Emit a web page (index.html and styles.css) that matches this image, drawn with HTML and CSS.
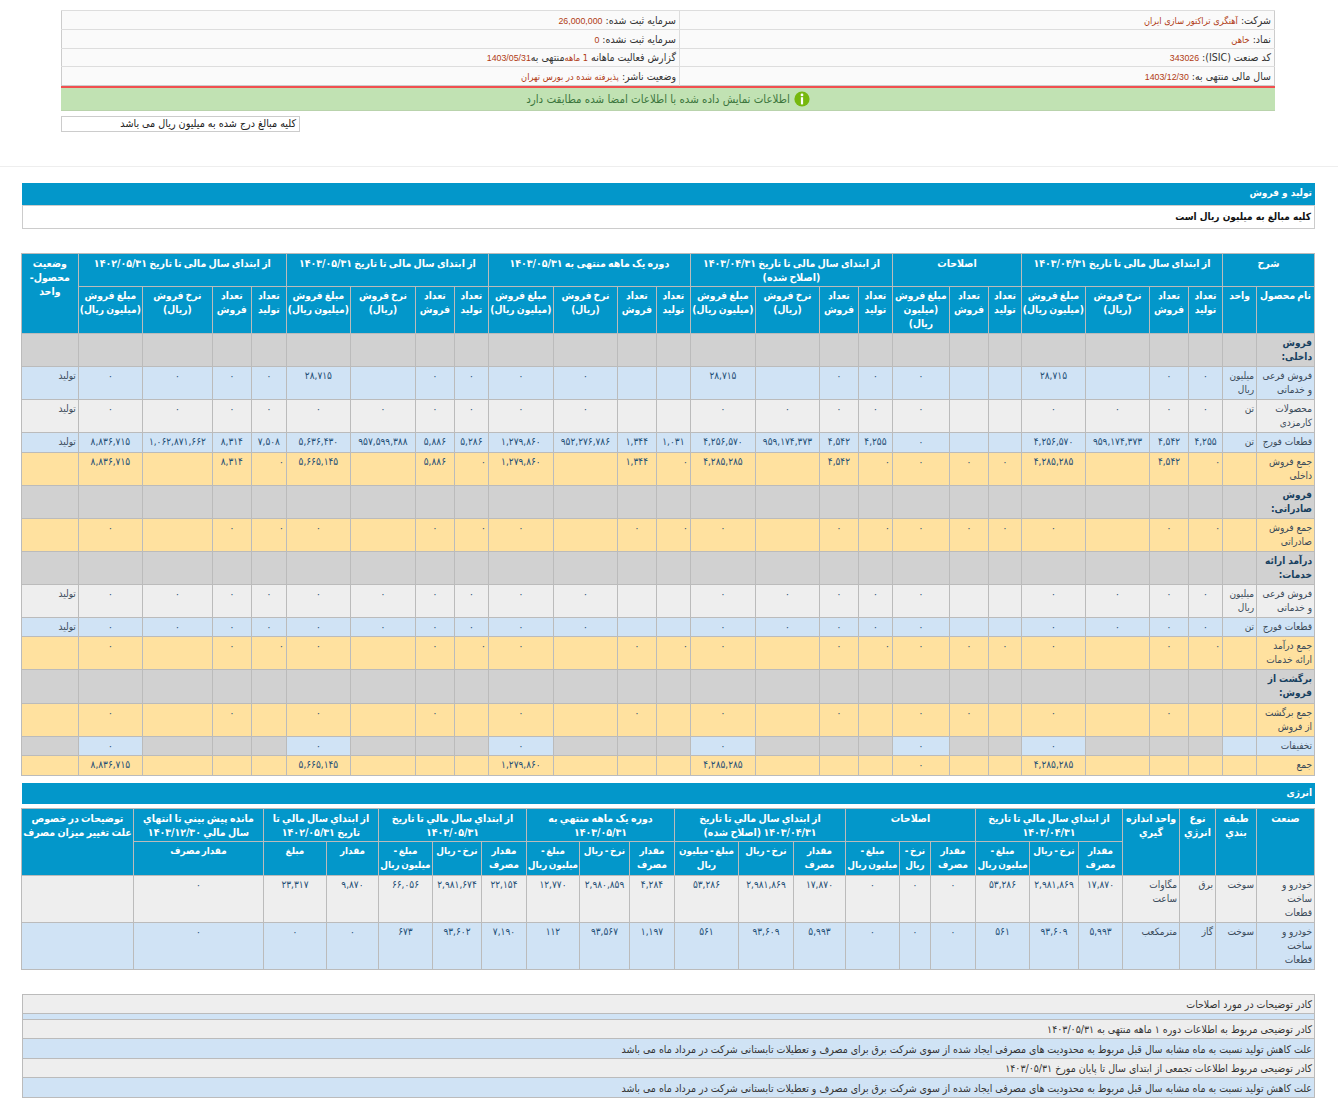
FILE: index.html
```html
<!DOCTYPE html>
<html lang="fa" dir="rtl">
<head>
<meta charset="utf-8">
<title>گزارش فعالیت ماهانه</title>
<link rel="stylesheet" href="styles.css">
</head>
<body>
<header class="top">
  <table class="info">
    <tr class="ih19"><td class="i-r"><span class="lb">شرکت:</span> <span class="val">آهنگری تراکتور سازی ایران</span></td><td><span class="lb">سرمایه ثبت شده:</span> <span class="val num">26,000,000</span></td></tr>
    <tr class="ih19"><td class="i-r"><span class="lb">نماد:</span> <span class="val">خاهن</span></td><td><span class="lb">سرمایه ثبت نشده:</span> <span class="val num">0</span></td></tr>
    <tr class="ih18"><td class="i-r"><span class="lb">کد صنعت (ISIC):</span> <span class="val num">343026</span></td><td><span class="lb">گزارش فعالیت ماهانه</span> <span class="val">1 ماهه</span><span class="lb">‌منتهی به</span><span class="val num">1403/05/31</span></td></tr>
    <tr class="ih19"><td class="i-r"><span class="lb">سال مالی منتهی به:</span> <span class="val num">1403/12/30</span></td><td><span class="lb">وضعیت ناشر:</span> <span class="val">پذیرفته شده در بورس تهران</span></td></tr>
  </table>
  <div class="ok">
    <svg class="ok-ico" viewBox="0 0 16 16" aria-hidden="true"><circle cx="8" cy="8" r="7.6" fill="#76b80e"/><circle cx="8" cy="3.9" r="1.4" fill="#fff"/><rect x="6.9" y="6.2" width="2.2" height="7.2" fill="#fff"/></svg>
    <span>اطلاعات نمایش داده شده با اطلاعات امضا شده مطابقت دارد</span>
  </div>
  <div class="note-row"><div class="note">کلیه مبالغ درج شده به میلیون ریال می باشد</div></div>
</header>
<hr class="sep">
<main class="content">
  <h2 class="bar">تولید و فروش</h2>
  <div class="sub">کلیه مبالغ به میلیون ریال است</div>

  <table class="grid main">
    <colgroup>
      <col class="w58"><col class="w34">
      <col class="w34"><col class="w39"><col class="w64"><col class="w64">
      <col class="w33"><col class="w39"><col class="w57">
      <col class="w34"><col class="w39"><col class="w64"><col class="w65">
      <col class="w34"><col class="w39"><col class="w64"><col class="w65">
      <col class="w34"><col class="w39"><col class="w65"><col class="w64">
      <col class="w35"><col class="w39"><col class="w70"><col class="w64">
      <col class="w57">
    </colgroup>
    <thead>
      <tr class="h33">
        <th colspan="2">شرح</th>
        <th colspan="4">از ابتدای سال مالی تا تاریخ ۱۴۰۳/۰۴/۳۱</th>
        <th colspan="3">اصلاحات</th>
        <th colspan="4">از ابتدای سال مالی تا تاریخ ۱۴۰۳/۰۴/۳۱ (اصلاح&nbsp;شده)</th>
        <th colspan="4">دوره یک ماهه منتهی به ۱۴۰۳/۰۵/۳۱</th>
        <th colspan="4">از ابتدای سال مالی تا تاریخ ۱۴۰۳/۰۵/۳۱</th>
        <th colspan="4">از ابتدای سال مالی تا تاریخ ۱۴۰۲/۰۵/۳۱</th>
        <th rowspan="2">وضعیت محصول- واحد</th>
      </tr>
      <tr class="h47">
        <th>نام محصول</th><th>واحد</th>
        <th>تعداد تولید</th><th>تعداد فروش</th><th>نرخ فروش (ریال)</th><th>مبلغ فروش (میلیون&nbsp;ریال)</th>
        <th>تعداد تولید</th><th>تعداد فروش</th><th>مبلغ فروش (میلیون ریال)</th>
        <th>تعداد تولید</th><th>تعداد فروش</th><th>نرخ فروش (ریال)</th><th>مبلغ فروش (میلیون&nbsp;ریال)</th>
        <th>تعداد تولید</th><th>تعداد فروش</th><th>نرخ فروش (ریال)</th><th>مبلغ فروش (میلیون&nbsp;ریال)</th>
        <th>تعداد تولید</th><th>تعداد فروش</th><th>نرخ فروش (ریال)</th><th>مبلغ فروش (میلیون&nbsp;ریال)</th>
        <th>تعداد تولید</th><th>تعداد فروش</th><th>نرخ فروش (ریال)</th><th>مبلغ فروش (میلیون&nbsp;ریال)</th>
      </tr>
    </thead>
    <tbody>
      <tr class="h33 sec"><td class="nm">فروش داخلی:</td><td colspan="1"></td><td></td><td></td><td></td><td></td><td></td><td></td><td></td><td></td><td></td><td></td><td></td><td></td><td></td><td></td><td></td><td></td><td></td><td></td><td></td><td></td><td></td><td></td><td></td><td></td></tr>
      <tr class="h33 blu"><td class="tx">فروش فرعی و خدماتی</td><td class="tx">میلیون ریال</td><td>۰</td><td>۰</td><td></td><td>۲۸,۷۱۵</td><td></td><td></td><td>۰</td><td>۰</td><td>۰</td><td></td><td>۲۸,۷۱۵</td><td></td><td></td><td>۰</td><td>۰</td><td>۰</td><td>۰</td><td></td><td>۲۸,۷۱۵</td><td>۰</td><td>۰</td><td>۰</td><td>۰</td><td class="tx">تولید</td></tr>
      <tr class="h33 lgt"><td class="tx">محصولات کارمزدی</td><td class="tx">تن</td><td>۰</td><td>۰</td><td>۰</td><td>۰</td><td></td><td></td><td>۰</td><td>۰</td><td>۰</td><td>۰</td><td>۰</td><td></td><td></td><td>۰</td><td>۰</td><td>۰</td><td>۰</td><td>۰</td><td>۰</td><td>۰</td><td>۰</td><td>۰</td><td>۰</td><td class="tx">تولید</td></tr>
      <tr class="h20 blu"><td class="tx">قطعات فورج</td><td class="tx">تن</td><td>۴,۲۵۵</td><td>۴,۵۴۲</td><td>۹۵۹,۱۷۴,۳۷۳</td><td>۴,۲۵۶,۵۷۰</td><td></td><td></td><td>۰</td><td>۴,۲۵۵</td><td>۴,۵۴۲</td><td>۹۵۹,۱۷۴,۳۷۳</td><td>۴,۲۵۶,۵۷۰</td><td>۱,۰۳۱</td><td>۱,۳۴۴</td><td>۹۵۲,۲۷۶,۷۸۶</td><td>۱,۲۷۹,۸۶۰</td><td>۵,۲۸۶</td><td>۵,۸۸۶</td><td>۹۵۷,۵۹۹,۳۸۸</td><td>۵,۶۳۶,۴۳۰</td><td>۷,۵۰۸</td><td>۸,۳۱۴</td><td>۱,۰۶۲,۸۷۱,۶۶۲</td><td>۸,۸۳۶,۷۱۵</td><td class="tx">تولید</td></tr>
      <tr class="h33 sum"><td class="tx">جمع فروش داخلی</td><td></td><td class="st">۰</td><td>۴,۵۴۲</td><td></td><td>۴,۲۸۵,۲۸۵</td><td>۰</td><td>۰</td><td>۰</td><td class="st">۰</td><td>۴,۵۴۲</td><td></td><td>۴,۲۸۵,۲۸۵</td><td class="st">۰</td><td>۱,۳۴۴</td><td></td><td>۱,۲۷۹,۸۶۰</td><td class="st">۰</td><td>۵,۸۸۶</td><td></td><td>۵,۶۶۵,۱۴۵</td><td class="st">۰</td><td>۸,۳۱۴</td><td></td><td>۸,۸۳۶,۷۱۵</td><td></td></tr>
      <tr class="h33 sec"><td class="nm">فروش صادراتی:</td><td></td><td></td><td></td><td></td><td></td><td></td><td></td><td></td><td></td><td></td><td></td><td></td><td></td><td></td><td></td><td></td><td></td><td></td><td></td><td></td><td></td><td></td><td></td><td></td><td></td></tr>
      <tr class="h33 sum"><td class="tx">جمع فروش صادراتی</td><td></td><td class="st">۰</td><td>۰</td><td></td><td>۰</td><td>۰</td><td>۰</td><td>۰</td><td class="st">۰</td><td>۰</td><td></td><td>۰</td><td class="st">۰</td><td>۰</td><td></td><td>۰</td><td class="st">۰</td><td>۰</td><td></td><td>۰</td><td class="st">۰</td><td>۰</td><td></td><td>۰</td><td></td></tr>
      <tr class="h32 sec"><td class="nm">درآمد ارائه خدمات:</td><td></td><td></td><td></td><td></td><td></td><td></td><td></td><td></td><td></td><td></td><td></td><td></td><td></td><td></td><td></td><td></td><td></td><td></td><td></td><td></td><td></td><td></td><td></td><td></td><td></td></tr>
      <tr class="h33 lgt"><td class="tx">فروش فرعی و خدماتی</td><td class="tx">میلیون ریال</td><td>۰</td><td>۰</td><td>۰</td><td>۰</td><td></td><td></td><td>۰</td><td>۰</td><td>۰</td><td>۰</td><td>۰</td><td></td><td></td><td>۰</td><td>۰</td><td>۰</td><td>۰</td><td>۰</td><td>۰</td><td>۰</td><td>۰</td><td>۰</td><td>۰</td><td class="tx">تولید</td></tr>
      <tr class="h19 blu"><td class="tx">قطعات فورج</td><td class="tx">تن</td><td>۰</td><td>۰</td><td>۰</td><td>۰</td><td></td><td></td><td>۰</td><td>۰</td><td>۰</td><td>۰</td><td>۰</td><td></td><td></td><td>۰</td><td>۰</td><td>۰</td><td>۰</td><td>۰</td><td>۰</td><td>۰</td><td>۰</td><td>۰</td><td>۰</td><td class="tx">تولید</td></tr>
      <tr class="h33 sum"><td class="tx">جمع درآمد ارائه خدمات</td><td></td><td class="st">۰</td><td>۰</td><td></td><td>۰</td><td>۰</td><td>۰</td><td>۰</td><td class="st">۰</td><td>۰</td><td></td><td>۰</td><td class="st">۰</td><td>۰</td><td></td><td>۰</td><td class="st">۰</td><td>۰</td><td></td><td>۰</td><td class="st">۰</td><td>۰</td><td></td><td>۰</td><td></td></tr>
      <tr class="h34 sec"><td class="nm">برگشت از فروش:</td><td></td><td></td><td></td><td></td><td></td><td></td><td></td><td></td><td></td><td></td><td></td><td></td><td></td><td></td><td></td><td></td><td></td><td></td><td></td><td></td><td></td><td></td><td></td><td></td><td></td></tr>
      <tr class="h33 sum"><td class="tx">جمع برگشت از فروش</td><td></td><td></td><td>۰</td><td></td><td>۰</td><td></td><td>۰</td><td>۰</td><td></td><td>۰</td><td></td><td>۰</td><td></td><td>۰</td><td></td><td>۰</td><td></td><td>۰</td><td></td><td>۰</td><td></td><td>۰</td><td></td><td>۰</td><td></td></tr>
      <tr class="h19 sec plain"><td class="tx blc">تخفیفات</td><td class="blc"></td><td></td><td></td><td></td><td class="blc">۰</td><td></td><td></td><td class="blc">۰</td><td></td><td></td><td></td><td class="blc">۰</td><td></td><td></td><td></td><td class="blc">۰</td><td></td><td></td><td></td><td class="blc">۰</td><td></td><td></td><td></td><td class="blc">۰</td><td></td></tr>
      <tr class="h20 sum"><td class="tx">جمع</td><td></td><td></td><td></td><td></td><td>۴,۲۸۵,۲۸۵</td><td></td><td></td><td>۰</td><td></td><td></td><td></td><td>۴,۲۸۵,۲۸۵</td><td></td><td></td><td></td><td>۱,۲۷۹,۸۶۰</td><td></td><td></td><td></td><td>۵,۶۶۵,۱۴۵</td><td></td><td></td><td></td><td>۸,۸۳۶,۷۱۵</td><td></td></tr>
    </tbody>
  </table>

  <h2 class="bar bar-en">انرژی</h2>
  <table class="grid energy">
    <colgroup>
      <col class="w58"><col class="w41"><col class="w36"><col class="w57">
      <col class="w44"><col class="w49"><col class="w54">
      <col class="w45"><col class="w31"><col class="w54">
      <col class="w52"><col class="w55"><col class="w64">
      <col class="w45"><col class="w50"><col class="w53">
      <col class="w45"><col class="w49"><col class="w54">
      <col class="w52"><col class="w63">
      <col class="w130"><col class="w112">
    </colgroup>
    <thead>
      <tr class="h33">
        <th rowspan="2">صنعت</th><th rowspan="2">طبقه بندي</th><th rowspan="2">نوع انرژي</th><th rowspan="2">واحد اندازه گيري</th>
        <th colspan="3">از ابتداي سال مالي تا تاريخ ۱۴۰۳/۰۴/۳۱</th>
        <th colspan="3">اصلاحات</th>
        <th colspan="3">از ابتداي سال مالي تا تاريخ ۱۴۰۳/۰۴/۳۱ (اصلاح&nbsp;شده)</th>
        <th colspan="3">دوره يک ماهه منتهي به ۱۴۰۳/۰۵/۳۱</th>
        <th colspan="3">از ابتداي سال مالي تا تاريخ ۱۴۰۳/۰۵/۳۱</th>
        <th colspan="2">از ابتداي سال مالي تا تاريخ ۱۴۰۲/۰۵/۳۱</th>
        <th>مانده پيش بيني تا انتهاي سال مالي ۱۴۰۳/۱۲/۳۰</th>
        <th rowspan="2">توضيحات در خصوص علت تغيير ميزان مصرف</th>
      </tr>
      <tr class="h34">
        <th>مقدار مصرف</th><th>نرخ - ريال</th><th>مبلغ - میلیون&nbsp;ریال</th>
        <th>مقدار مصرف</th><th>نرخ - ريال</th><th>مبلغ - میلیون&nbsp;ریال</th>
        <th>مقدار مصرف</th><th>نرخ - ريال</th><th>مبلغ - میلیون ریال</th>
        <th>مقدار مصرف</th><th>نرخ - ريال</th><th>مبلغ - میلیون&nbsp;ریال</th>
        <th>مقدار مصرف</th><th>نرخ - ريال</th><th>مبلغ - میلیون&nbsp;ریال</th>
        <th>مقدار</th><th>مبلغ</th><th>مقدار مصرف</th>
      </tr>
    </thead>
    <tbody>
      <tr class="h47 lgt"><td class="tx">خودرو و ساخت قطعات</td><td class="tx">سوخت</td><td class="tx">برق</td><td class="tx">مگاوات ساعت</td><td>۱۷,۸۷۰</td><td>۲,۹۸۱,۸۶۹</td><td>۵۳,۲۸۶</td><td>۰</td><td>۰</td><td>۰</td><td>۱۷,۸۷۰</td><td>۲,۹۸۱,۸۶۹</td><td>۵۳,۲۸۶</td><td>۴,۲۸۴</td><td>۲,۹۸۰,۸۵۹</td><td>۱۲,۷۷۰</td><td>۲۲,۱۵۴</td><td>۲,۹۸۱,۶۷۴</td><td>۶۶,۰۵۶</td><td>۹,۸۷۰</td><td>۲۳,۳۱۷</td><td>۰</td><td></td></tr>
      <tr class="h47 blu"><td class="tx">خودرو و ساخت قطعات</td><td class="tx">سوخت</td><td class="tx">گاز</td><td class="tx">مترمکعب</td><td>۵,۹۹۳</td><td>۹۳,۶۰۹</td><td>۵۶۱</td><td>۰</td><td>۰</td><td>۰</td><td>۵,۹۹۳</td><td>۹۳,۶۰۹</td><td>۵۶۱</td><td>۱,۱۹۷</td><td>۹۳,۵۶۷</td><td>۱۱۲</td><td>۷,۱۹۰</td><td>۹۳,۶۰۲</td><td>۶۷۳</td><td>۰</td><td>۰</td><td>۰</td><td></td></tr>
    </tbody>
  </table>

  <table class="notes">
    <tr class="n19 lgt"><td>کادر توضیحات در مورد اصلاحات</td></tr>
    <tr class="n6 blu"><td></td></tr>
    <tr class="n19 lgt"><td>کادر توضیحی مربوط به اطلاعات دوره ۱ ماهه منتهی به ۱۴۰۳/۰۵/۳۱</td></tr>
    <tr class="n20 blu"><td>علت کاهش تولید نسبت به ماه مشابه سال قبل مربوط به محدودیت های مصرفی ایجاد شده از سوی شرکت برق برای مصرف و تعطیلات تابستانی شرکت در مرداد ماه می باشد</td></tr>
    <tr class="n19 lgt"><td>کادر توضیحی مربوط اطلاعات تجمعی از ابتدای سال تا پایان مورخ ۱۴۰۳/۰۵/۳۱</td></tr>
    <tr class="n20 blu"><td>علت کاهش تولید نسبت به ماه مشابه سال قبل مربوط به محدودیت های مصرفی ایجاد شده از سوی شرکت برق برای مصرف و تعطیلات تابستانی شرکت در مرداد ماه می باشد</td></tr>
  </table>
</main>
</body>
</html>
```
FILE: styles.css
```css
* { box-sizing: border-box; }
html, body { margin: 0; padding: 0; background: #fff; }
body {
  font-family: "DejaVu Sans", "Liberation Sans", sans-serif;
  font-stretch: condensed;
  font-size: 10px;
  line-height: 14px;
  color: #333;
}
table { border-collapse: collapse; table-layout: fixed; }

.top { padding: 10px 63px 0 61px; }
.info { width: 1214px; background: #fafafa; border: 1px solid #ccc; }
.info td { border-top: 1px solid #ddd; padding: 0 3px; font-size: 10.5px; vertical-align: middle; }
.info td.i-r { width: 595px; border-left: 1px solid #ddd; }
.ih18 { height: 18px; }
.ih19 { height: 19px; }
.lb { color: #333; }
.val { color: #b03a14; font-size: 9.2px; }
.val.num { font-family: "Liberation Sans", sans-serif; font-size: 8.8px; }
.ok {
  height: 25px;
  background: #c1e2b3;
  border-top: 2px solid #f14f4f;
  border-bottom: 1px solid #b9d3ac;
  color: #3c763d;
  font-size: 11.4px;
  display: flex;
  align-items: center;
  justify-content: center;
  gap: 4px;
}
.ok-ico { width: 16px; height: 16px; flex: none; }
.note-row { display: flex; justify-content: flex-end; padding-top: 5px; }
.note {
  width: 239px;
  height: 16px;
  border: 1px solid #ccc;
  background: #fff;
  color: #222;
  font-size: 10.7px;
  padding: 0 3px;
}
.sep { margin: 34px 0 16px; border: 0; border-top: 1px solid #eee; height: 0; }

.content { padding: 0 23px 0 22px; }
.bar {
  margin: 0;
  height: 22px;
  background: #0397ca;
  color: #fff;
  font-size: 10px;
  font-weight: 700;
  line-height: 20px;
  padding: 0 3px;
}
.bar-en { margin-top: 7px; height: 21px; }
.sub {
  height: 24px;
  border: 1px solid #ccc;
  color: #111;
  font-weight: 700;
  font-size: 10px;
  line-height: 21px;
  padding: 0 3px;
}

.grid { width: 1293px; }
.main { margin-top: 24px; }
.energy { margin-top: 4px; }
.grid th, .grid td { border: 1px solid #bbb; vertical-align: top; padding: 2px; overflow: hidden; }
.grid th {
  background: #0397ca;
  color: #fff;
  font-weight: 700;
  font-size: 10.5px;
  text-align: center;
  padding: 2px 1px;
  word-spacing: -1px;
}
.main thead tr + tr th { font-size: 10.2px; }
.energy thead tr + tr th { font-size: 9.8px; padding: 2px 0; word-spacing: -1.5px; }
.grid td { text-align: center; font-size: 10px; color: #1f4f75; }
.grid td.tx { text-align: right; color: #3a4a5a; }
.grid td.nm { text-align: right; color: #17405f; font-weight: 700; font-size: 10px; }
.grid td.st { text-align: right; }

.sec td { background: #d1d1d1; }
.blu td { background: #d0e3f5; }
.lgt td { background: #eee; }
.sum td { background: #ffe19f; }
.plain td.blc { background: #d0e3f5; }

.h19 { height: 19px; }
.h20 { height: 20px; }
.h32 { height: 32px; }
.h33 { height: 33px; }
.h34 { height: 34px; }
.h47 { height: 47px; }

.w31 { width: 31px; } .w33 { width: 33px; } .w34 { width: 34px; } .w35 { width: 35px; }
.w36 { width: 36px; } .w39 { width: 39px; } .w41 { width: 41px; } .w44 { width: 44px; }
.w45 { width: 45px; } .w49 { width: 49px; } .w50 { width: 50px; } .w52 { width: 52px; }
.w53 { width: 53px; } .w54 { width: 54px; } .w55 { width: 55px; } .w57 { width: 57px; }
.w58 { width: 58px; } .w63 { width: 63px; } .w64 { width: 64px; } .w65 { width: 65px; }
.w70 { width: 70px; } .w112 { width: 112px; } .w130 { width: 130px; }

.notes { width: 1293px; margin-top: 24px; }
.notes td { border: 1px solid #bbb; padding: 0 2px; font-size: 10.5px; color: #333; text-align: right; vertical-align: middle; }
.n6 { height: 6px; }
.n19 { height: 19px; }
.n20 { height: 20px; }
```
